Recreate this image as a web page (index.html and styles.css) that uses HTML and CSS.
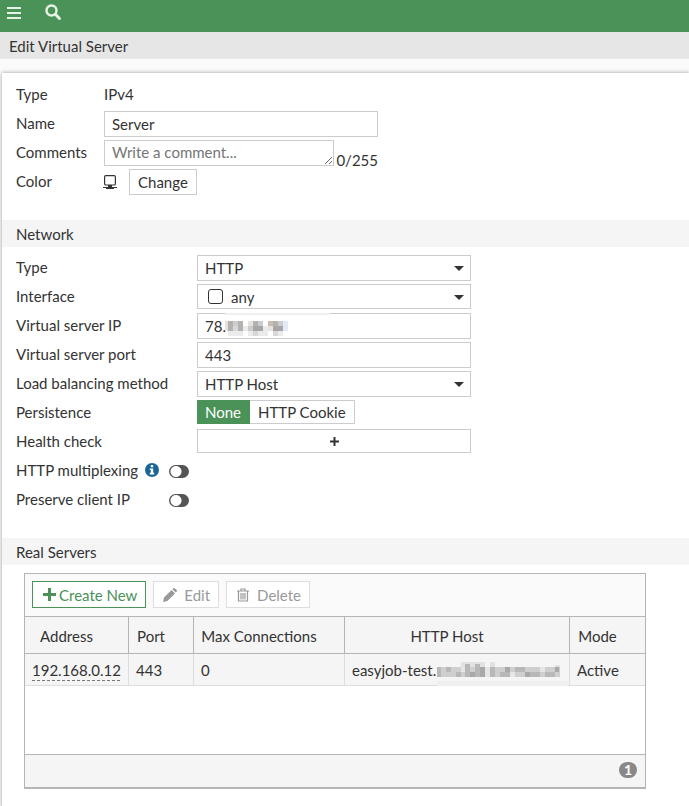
FILE: index.html
```html
<!DOCTYPE html>
<html lang="en">
<head>
<meta charset="utf-8">
<title>Edit Virtual Server</title>
<link rel="stylesheet" href="styles.css">
</head>
<body>
<header class="topbar">
  <button class="icon-btn" type="button" aria-label="Menu"><svg width="14" height="14" viewBox="0 0 14 14"><path d="M0 1h14v2H0zM0 6h14v2H0zM0 11h14v2H0z"/></svg></button>
  <button class="icon-btn" type="button" aria-label="Search"><svg width="17" height="17" viewBox="0 0 17 17"><circle cx="6.5" cy="6.5" r="5" fill="none" stroke="currentColor" stroke-width="2.4"/><path d="M10.3 10.3l4.2 4.2" stroke="currentColor" stroke-width="3" stroke-linecap="round"/></svg></button>
</header>
<h1 class="page-title">Edit Virtual Server</h1>
<main class="panel">
  <form>
    <section class="fields fields-general">
      <span class="label">Type</span>
      <span class="label">IPv4</span>
      <label class="label" for="name">Name</label>
      <div class="control"><input class="box wide" id="name" type="text" value="Server"></div>
      <label class="label" for="comments">Comments</label>
      <div class="control wide comment"><textarea class="box" id="comments" rows="1" placeholder="Write a comment..."></textarea><span class="count">0/255</span></div>
      <span class="label">Color</span>
      <div class="control color">
        <svg width="14" height="14" viewBox="0 0 14 14"><rect x="1.6" y=".6" width="10.8" height="9.400" rx="1.3" fill="none" stroke="currentColor" stroke-width="1.200"/><path d="M5 10h4v2H5zM0 12h14v1H0zM3 12h8v2H3z"/></svg>
        <button class="box btn" type="button">Change</button>
      </div>
    </section>

    <h2 class="section-title">Network</h2>
    <section class="fields fields-network">
      <label class="label" for="type">Type</label>
      <div class="control select wide"><select class="box" id="type"><option>HTTP</option></select></div>
      <label class="label" for="interface">Interface</label>
      <div class="control select wide with-icon"><select class="box" id="interface"><option>any</option></select></div>
      <label class="label" for="ip">Virtual server IP</label>
      <div class="control wide"><input class="box" id="ip" type="text" value="78.">
        <svg class="mosaic mosaic-ip" width="105" height="24" viewBox="0 0 105 24" shape-rendering="crispEdges">
          <path fill="#f0f0f0" d="M0 0h105v2H0z"/>
          <path fill="#e9e1dc" d="M0 8h3v5H0zM0 13h3v5H0zM23 8h5v5h-5zM43 13h5v5h-5z"/>
          <path fill="#b2b2b2" d="M3 8h5v10H3zM13 8h5v10h-5zM28 8h5v5h-5zM48 8h5v5h-5zM58 13h1v5h-1z"/>
          <path fill="#ccc" d="M8 8h5v5H8zM23 13h5v5h-5zM33 8h5v5h-5zM53 8h5v5h-5z"/>
          <path fill="#d8d8d8" d="M8 13h5v5H8zM28 18h5v5h-5zM48 18h5v5h-5z"/>
          <path fill="#c9bdb3" d="M43 8h5v5h-5z"/>
          <path fill="#a6a6a6" d="M28 13h10v5H28zM48 13h10v5H48z"/>
          <path fill="#ebebeb" d="M3 18h15v5H3zM18 13h5v5h-5zM23 18h5v5h-5zM33 18h5v5h-5zM38 13h5v10h-5zM53 18h5v5h-5z"/>
          <path fill="#e3eaf6" d="M58 8h5v10h-5z"/>
        </svg></div>
      <label class="label" for="port">Virtual server port</label>
      <div class="control"><input class="box wide" id="port" type="text" value="443"></div>
      <label class="label" for="method">Load balancing method</label>
      <div class="control select wide"><select class="box" id="method"><option>HTTP Host</option></select></div>
      <span class="label">Persistence</span>
      <div class="control short"><button class="seg active" type="button">None</button><button class="seg" type="button">HTTP Cookie</button></div>
      <span class="label">Health check</span>
      <div class="control short"><button class="box add wide" type="button" aria-label="Add health check"><svg width="9" height="9" viewBox="0 0 9 9"><path d="M3.500 0h2v3.500H9v2H5.500V9h-2V5.500H0v-2h3.500z"/></svg></button></div>
    </section>
    <section class="fields fields-toggles">
      <label class="label" for="mux">HTTP multiplexing <svg class="info" width="14" height="14" viewBox="0 0 14 14"><circle cx="7" cy="7" r="7" fill="#1a6496"/><path fill="#fff" d="M5.800 2h2.400v2.200H5.800zM4.800 5.400h3.400v4.400h1v1.600H4.800V9.800h1V7h-1z"/></svg></label>
      <div class="control"><input class="toggle" id="mux" type="checkbox"></div>
      <label class="label" for="preserve">Preserve client IP</label>
      <div class="control"><input class="toggle" id="preserve" type="checkbox"></div>
    </section>

    <h2 class="section-title">Real Servers</h2>
    <section class="grid">
      <div class="toolbar">
        <button class="tool create" type="button"><svg width="13" height="13" viewBox="0 0 13 13"><path d="M5 0h3v5h5v3H8v5H5V8H0V5h5z"/></svg>Create New</button>
        <button class="tool" type="button" disabled><svg width="14" height="14" viewBox="0 0 14 14"><path d="M0 14l1-4.400 7.600-7.600 3.400 3.400L4.400 13zM9.400 1.200l1-1q.8-.5 1.600.2l1.700 1.700q.6.800 0 1.500l-1 1z"/></svg>Edit</button>
        <button class="tool" type="button" disabled><svg width="14" height="14" viewBox="0 0 14 14"><path fill="none" stroke="currentColor" stroke-width="1.200" d="M1 3h12M5 3V1h4v2M2.500 3v10h9V3M5 5v6.500M7 5v6.500M9 5v6.500"/></svg>Delete</button>
      </div>
      <table>
        <colgroup><col class="c-address"><col class="c-port"><col class="c-max"><col><col class="c-mode"></colgroup>
        <thead><tr><th>Address</th><th>Port</th><th>Max Connections</th><th>HTTP Host</th><th>Mode</th></tr></thead>
        <tbody><tr><td><a href="#address">192.168.0.12</a></td><td>443</td><td>0</td><td class="host">easyjob-test.<svg class="mosaic mosaic-host" width="131" height="32" viewBox="0 0 131 32" shape-rendering="crispEdges">
          <path fill="#f0f0f0" d="M0 27h131v5H0z"/>
          <path fill="#e2e2e2" d="M24 8h24v5H24zM53 8h5v5h-5zM118 11h5v3h-5z"/>
          <path fill="#cfcfcf" d="M0 13h123v10H0z"/>
          <path fill="#b8b8b8" d="M0 13h4v10H0zM9 13h5v5H9zM19 18h5v5h-5zM28 10h5v13h-5zM38 10h5v13h-5zM53 13h5v10h-5zM63 18h10v5H63zM78 13h10v5H78zM93 18h10v5H93zM108 18h10v5h-10z"/>
          <path fill="#a9a9a9" d="M33 18h5v5h-5zM43 13h5v10h-5zM68 13h5v5h-5zM88 18h5v5h-5zM118 13h4v5h-4z"/>
          <path fill="#e6e6e6" d="M48 13h5v10h-5zM24 13h4v5h-4zM73 18h5v5h-5zM103 13h5v5h-5z"/>
        </svg></td><td>Active</td></tr></tbody>
      </table>
      <div class="empty"></div>
      <footer class="grid-footer"><span class="badge">1</span></footer>
    </section>
  </form>
</main>
</body>
</html>
```
FILE: styles.css
```css
* { box-sizing: border-box; }
body { margin: 0; background: #fafafa; color: #333; font: 15px/20px Lato, sans-serif; }
button, input, select, textarea { font: inherit; color: inherit; margin: 0; }
h1, h2 { margin: 0; font: inherit; }
svg { fill: currentColor; flex: none; }
.topbar { height: 32px; background: #4a9258; display: flex; gap: 24px; padding: 4px 7px; color: #e4f3e4; }
.icon-btn { display: flex; align-items: center; height: 17px; padding: 0; border: 0; background: none; }
.page-title { background: #e6e6e6; padding: 4px 9px 3px; }
.panel { margin: 14px 0 0 2px; padding: 9px 0 18px; background: #fff; box-shadow: 0 0 4px #999; }
.fields { display: grid; row-gap: 3px; grid-auto-rows: 26px; padding-left: 14px; align-items: center; }
.fields-general { grid-template-columns: 88px 1fr; margin-bottom: 25px; }
.fields-network { grid-template-columns: 181px 1fr; margin-top: 8px; }
.fields-toggles { grid-template-columns: 153px 1fr; margin: 3px 0 25px; }
.label { padding-bottom: 2px; }
.control { display: flex; align-items: center; min-width: 0; position: relative; }
.wide { width: 100%; max-width: 274px; }
.box { display: block; width: 100%; height: 26px; border: 1px solid #ccc; border-radius: 0; background: #fff; padding: 0 8px 0 7px; outline: 0; }
.comment { gap: 2px; }
.comment textarea { flex: 1; min-width: 0; padding-top: 1px; resize: both; overflow: hidden; }
.comment textarea::placeholder { color: #757575; }
.count { align-self: flex-end; line-height: 12px; }
.color { gap: 12px; margin-left: -1px; }
.btn { width: auto; padding-left: 8px; }
.select select { appearance: none; }
.select::after { content: ""; position: absolute; right: 7px; top: 11px; border: 5px solid transparent; border-top-color: #333; border-bottom: 0; }
.with-icon select { height: 25px; padding-left: 33px; }
.with-icon { align-self: start; }
.with-icon::before { content: ""; position: absolute; left: 11px; top: 5px; width: 13px; height: 13px; border: 1px solid #333; border-radius: 3px; }
.mosaic { position: absolute; }
.mosaic-ip { left: 28px; top: 0; }
.short { align-self: start; }
.seg { height: 24px; padding: 0 8px; border: 1px solid #ccc; border-left: 0; background: #fff; }
.seg.active { background: #4a9258; color: #fff; border-color: #4a9258; }
.add { display: flex; align-items: center; justify-content: center; height: 24px; padding: 0; }
.info { margin-left: 3px; vertical-align: -1px; }
.toggle { appearance: none; width: 20px; height: 13px; border-radius: 7px; background: radial-gradient(circle at 7px 50%, #fff 5px, transparent 6px) #555; }
.section-title { background: #f5f5f5; padding: 4px 14px 3px; }
.grid { margin: 8px 43px 0 22px; border: 1px solid #b5b5b5; border-bottom-width: 2px; }
.toolbar { display: flex; gap: 7px; padding: 7px 7px 8px; background: #fafafa; border-bottom: 1px solid #b5b5b5; }
.tool { display: flex; align-items: center; gap: 7px; height: 27px; padding: 0 8px 0 9px; border: 1px solid #ddd; background: #fff; color: #999; }
.create { gap: 3px; padding-left: 10px; border-color: #4a9258; color: #4a9258; }
table { width: 100%; border-collapse: separate; border-spacing: 0; table-layout: fixed; background: #f5f5f5; }
.c-address { width: 104px; }
.c-port { width: 65px; }
.c-max { width: 151px; }
.c-mode { width: 75px; }
th, td { font-weight: 400; white-space: nowrap; }
th { height: 37px; padding: 1px 27px 0 7px; text-align: center; border-right: 1px solid #b5b5b5; border-bottom: 1px solid #b5b5b5; }
td { height: 32px; padding: 1px 7px 0; text-align: left; border-right: 1px solid #ddd; border-bottom: 1px solid #ddd; }
th:last-child, td:last-child { border-right: 0; }
td a { color: inherit; text-decoration: underline dashed 1px #777; text-underline-offset: 4px; }
.host { position: relative; }
.mosaic-host { left: 92px; top: 0; }
.empty { height: 68px; }
.grid-footer { display: flex; justify-content: flex-end; align-items: center; height: 33px; padding: 0 8px 2px; background: #f5f5f5; border-top: 1px solid #b5b5b5; }
.badge { width: 18px; height: 16px; border-radius: 8px; background: #888; color: #fff; text-align: center; font-size: 14px; font-weight: 700; line-height: 16px; }
```
